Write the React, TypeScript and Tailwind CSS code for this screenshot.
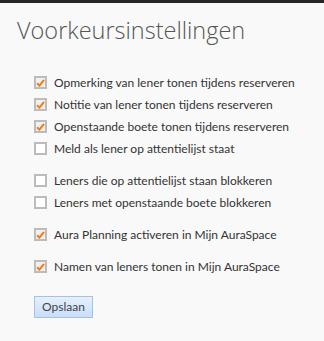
const groups: { label: string; checked: boolean }[][] = [
  [
    { label: "Opmerking van lener tonen tijdens reserveren", checked: true },
    { label: "Notitie van lener tonen tijdens reserveren", checked: true },
    { label: "Openstaande boete tonen tijdens reserveren", checked: true },
    { label: "Meld als lener op attentielijst staat", checked: false },
  ],
  [
    { label: "Leners die op attentielijst staan blokkeren", checked: false },
    { label: "Leners met openstaande boete blokkeren", checked: false },
  ],
  [{ label: "Aura Planning activeren in Mijn AuraSpace", checked: true }],
  [{ label: "Namen van leners tonen in Mijn AuraSpace", checked: true }],
];

function Check({ checked }: { checked: boolean }) {
  return (
    <span
      className={`flex h-[13px] w-[13px] shrink-0 items-center justify-center border-2 border-[#bcbcbc] ${
        checked ? "bg-[#f1f1f1]" : "bg-white"
      }`}
    >
      {checked && (
        <svg width="9" height="8" viewBox="0 0 9 8">
          <path d="M1 4.2 L3.4 6.6 L8 1" fill="none" stroke="#f07d1a" strokeWidth="2" />
        </svg>
      )}
    </span>
  );
}

export default function App() {
  return (
    <div className="h-[341px] w-[324px] overflow-hidden bg-[#f9f9f9] font-['Lato',sans-serif]">
      <div className="h-[3px] bg-[#262626]" />
      <h1 className="pl-[17px] pt-[12px] font-['Open_Sans',sans-serif] text-[23.5px] font-light leading-[30px] text-[#555]">
        Voorkeursinstellingen
      </h1>
      <div className="mt-[28px] flex flex-col gap-[13px] pl-[34px]">
        {groups.map((g, i) => (
          <div key={i} className="flex flex-col gap-[3px]">
            {g.map((item) => (
              <label
                key={item.label}
                className="flex h-[19px] items-center gap-[7px] text-[12px] leading-[19px] text-[#333]"
              >
                <Check checked={item.checked} />
                <span className="whitespace-nowrap">{item.label}</span>
              </label>
            ))}
          </div>
        ))}
      </div>
      <button className="ml-[34px] mt-[20px] h-[22px] w-[59px] border border-[#a3c2ea] bg-gradient-to-b from-[#e6f0fd] to-[#c9defa] text-[12px] leading-[20px] text-[#444]">
        Opslaan
      </button>
    </div>
  );
}
